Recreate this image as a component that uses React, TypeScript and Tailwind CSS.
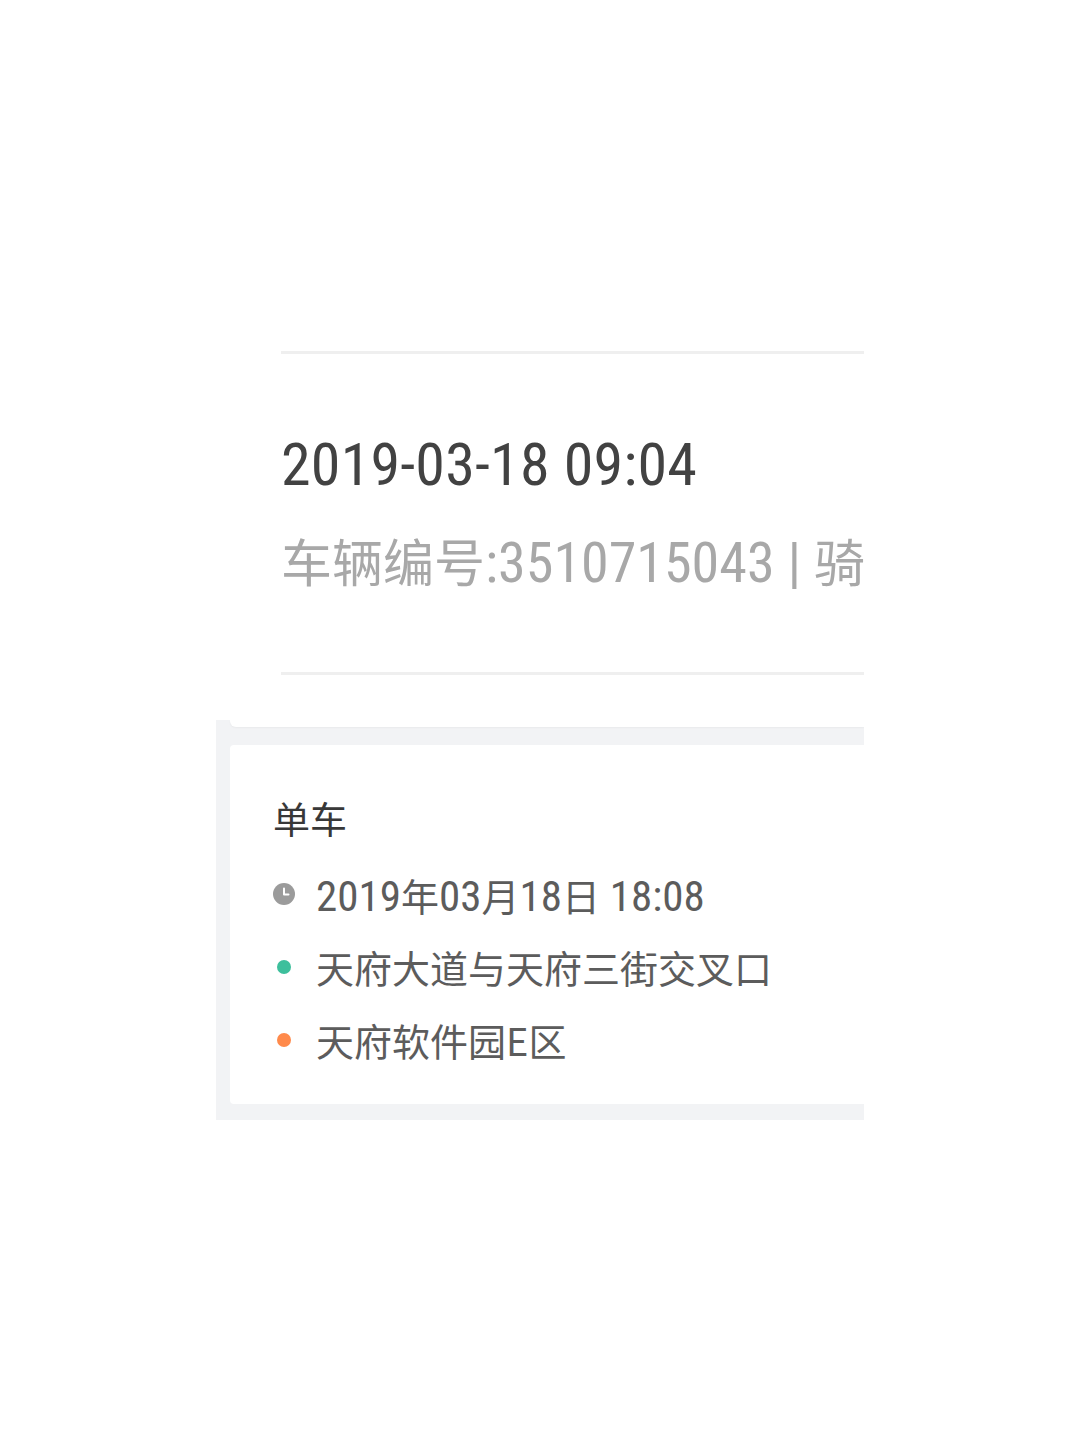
import React from "react";

const CJK = '"Noto Sans CJK SC", "Noto Sans", sans-serif';
const NUM = '"Liberation Sans Narrow", "Roboto Condensed", Roboto, "Noto Sans CJK SC", sans-serif';

function Num({ children, className }: { children: React.ReactNode; className: string }) {
  return (
    <span className={className} style={{ fontFamily: NUM }}>
      {children}
    </span>
  );
}

function Clock() {
  return (
    <svg width="22" height="22" viewBox="0 0 22 22">
      <circle cx="11" cy="11" r="11" fill="#9b9b9b" />
      <path d="M11 5.5V11.5H15.5" stroke="#fff" strokeWidth="2" fill="none" strokeLinecap="round" strokeLinejoin="round" />
    </svg>
  );
}

export default function App() {
  return (
    <div className="w-[1080px] h-[1440px] bg-white overflow-hidden" style={{ fontFamily: CJK }}>
      <div className="ml-[216px] w-[648px] overflow-hidden pt-[351px]">
        <div className="pl-[65px]">
          <div className="h-[3px] bg-[#efefef]" />
          <div className="mt-[79px] h-[64px] leading-[64px] whitespace-nowrap text-[#424242]">
            <Num className="text-[60px] tracking-[0.2px]">2019-03-18 09:04</Num>
          </div>
          <div className="mt-[33px] h-[60px] leading-[60px] whitespace-nowrap text-[#a8a8a8]">
            <span className="text-[51px]">车辆编号</span>
            <Num className="text-[56px] tracking-[0px]">:3510715043 | </Num>
            <span className="text-[51px]">骑</span>
          </div>
          <div className="mt-[82px] h-[3px] bg-[#efefef]" />
        </div>
        <div className="mt-[45px] bg-[#f2f3f5] pl-[14px] pb-[16px]">
          <div className="h-[7px] bg-white rounded-bl-[6px] shadow-[0_1px_2px_rgba(0,0,0,0.04)]" />
          <div className="mt-[18px] h-[359px] bg-white rounded-l-[4px] pl-[43px] pt-[51px]">
            <div className="h-[44px] leading-[44px] text-[37px] text-[#383838] whitespace-nowrap">单车</div>
            <div className="mt-[29px] flex flex-col gap-[23px]">
              <div className="flex items-center gap-[21px] h-[50px] whitespace-nowrap text-[#5c5c5c]">
                <div className="w-[22px] flex justify-center">
                  <Clock />
                </div>
                <div className="leading-[50px] mt-[10px]">
                  <Num className="text-[43px]">2019</Num>
                  <span className="text-[38px]">年</span>
                  <Num className="text-[43px]">03</Num>
                  <span className="text-[38px]">月</span>
                  <Num className="text-[43px]">18</Num>
                  <span className="text-[38px]">日</span>
                  <Num className="text-[43px]"> 18:08</Num>
                </div>
              </div>
              <div className="flex items-center gap-[21px] h-[50px] whitespace-nowrap text-[#5c5c5c]">
                <div className="w-[22px] flex justify-center">
                  <div className="w-[14px] h-[14px] rounded-full bg-[#3dbf9c]" />
                </div>
                <div className="leading-[50px] text-[38px]">天府大道与天府三街交叉口</div>
              </div>
              <div className="flex items-center gap-[21px] h-[50px] whitespace-nowrap text-[#5c5c5c]">
                <div className="w-[22px] flex justify-center">
                  <div className="w-[14px] h-[14px] rounded-full bg-[#ff8a4b]" />
                </div>
                <div className="leading-[50px] text-[38px]">天府软件园E区</div>
              </div>
            </div>
          </div>
        </div>
      </div>
    </div>
  );
}
